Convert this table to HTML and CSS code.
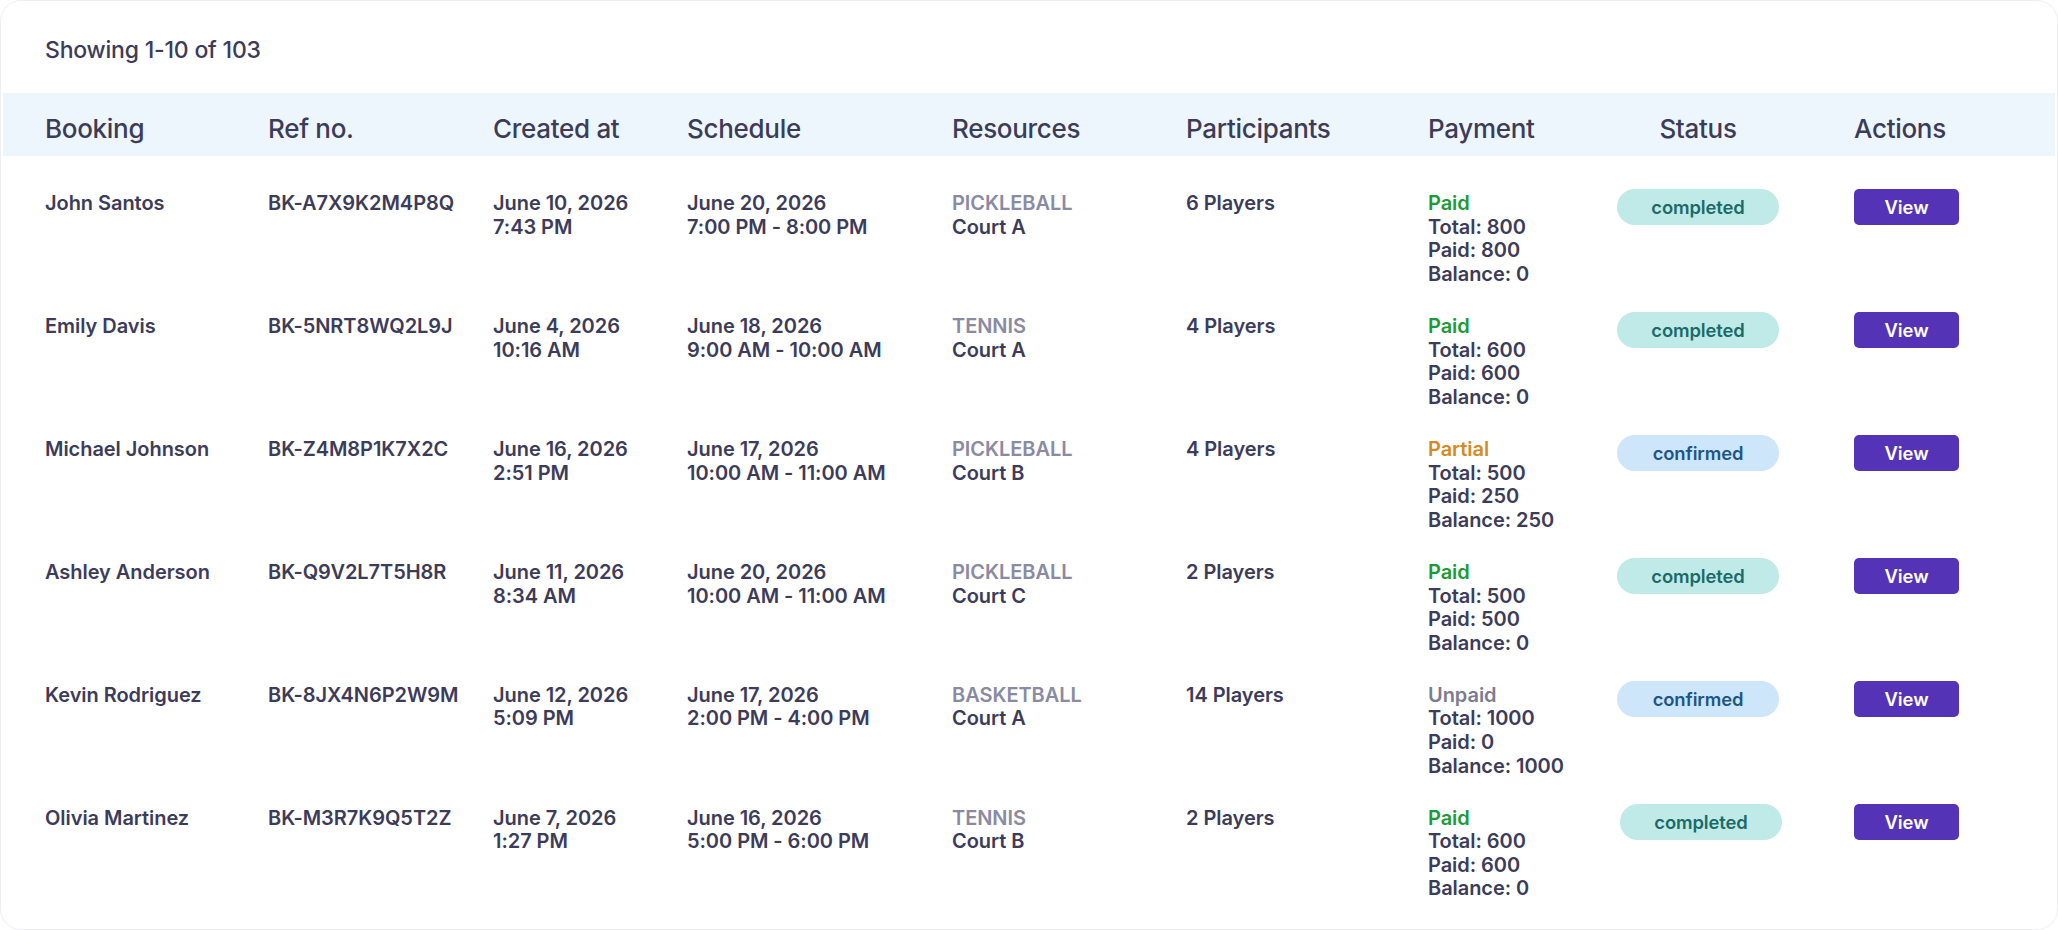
FILE: index.html
```html
<!DOCTYPE html>
<html lang="en">
<head>
<meta charset="utf-8">
<title>Bookings</title>
<link rel="stylesheet" href="styles.css">
</head>
<body>
<div class="card">
  <div class="summary">Showing 1-10 of 103</div>
  <div class="grid head">
    <div>Booking</div>
    <div>Ref no.</div>
    <div>Created at</div>
    <div>Schedule</div>
    <div>Resources</div>
    <div>Participants</div>
    <div>Payment</div>
    <div class="status-head">Status</div>
    <div>Actions</div>
  </div>
  <div class="rows">
    <div class="grid row">
      <div>John Santos</div>
      <div>BK-A7X9K2M4P8Q</div>
      <div>June 10, 2026<br>7:43 PM</div>
      <div>June 20, 2026<br>7:00 PM - 8:00 PM</div>
      <div><span class="cat">PICKLEBALL</span><br>Court A</div>
      <div>6 Players</div>
      <div><span class="pay paid">Paid</span><br>Total: 800<br>Paid: 800<br>Balance: 0</div>
      <div><span class="badge completed">completed</span></div>
      <div><button class="view">View</button></div>
    </div>
    <div class="grid row">
      <div>Emily Davis</div>
      <div>BK-5NRT8WQ2L9J</div>
      <div>June 4, 2026<br>10:16 AM</div>
      <div>June 18, 2026<br>9:00 AM - 10:00 AM</div>
      <div><span class="cat">TENNIS</span><br>Court A</div>
      <div>4 Players</div>
      <div><span class="pay paid">Paid</span><br>Total: 600<br>Paid: 600<br>Balance: 0</div>
      <div><span class="badge completed">completed</span></div>
      <div><button class="view">View</button></div>
    </div>
    <div class="grid row">
      <div>Michael Johnson</div>
      <div>BK-Z4M8P1K7X2C</div>
      <div>June 16, 2026<br>2:51 PM</div>
      <div>June 17, 2026<br>10:00 AM - 11:00 AM</div>
      <div><span class="cat">PICKLEBALL</span><br>Court B</div>
      <div>4 Players</div>
      <div><span class="pay partial">Partial</span><br>Total: 500<br>Paid: 250<br>Balance: 250</div>
      <div><span class="badge confirmed">confirmed</span></div>
      <div><button class="view">View</button></div>
    </div>
    <div class="grid row">
      <div>Ashley Anderson</div>
      <div>BK-Q9V2L7T5H8R</div>
      <div>June 11, 2026<br>8:34 AM</div>
      <div>June 20, 2026<br>10:00 AM - 11:00 AM</div>
      <div><span class="cat">PICKLEBALL</span><br>Court C</div>
      <div>2 Players</div>
      <div><span class="pay paid">Paid</span><br>Total: 500<br>Paid: 500<br>Balance: 0</div>
      <div><span class="badge completed">completed</span></div>
      <div><button class="view">View</button></div>
    </div>
    <div class="grid row">
      <div>Kevin Rodriguez</div>
      <div>BK-8JX4N6P2W9M</div>
      <div>June 12, 2026<br>5:09 PM</div>
      <div>June 17, 2026<br>2:00 PM - 4:00 PM</div>
      <div><span class="cat">BASKETBALL</span><br>Court A</div>
      <div>14 Players</div>
      <div><span class="pay unpaid">Unpaid</span><br>Total: 1000<br>Paid: 0<br>Balance: 1000</div>
      <div><span class="badge confirmed">confirmed</span></div>
      <div><button class="view">View</button></div>
    </div>
    <div class="grid row">
      <div>Olivia Martinez</div>
      <div>BK-M3R7K9Q5T2Z</div>
      <div>June 7, 2026<br>1:27 PM</div>
      <div>June 16, 2026<br>5:00 PM - 6:00 PM</div>
      <div><span class="cat">TENNIS</span><br>Court B</div>
      <div>2 Players</div>
      <div><span class="pay paid">Paid</span><br>Total: 600<br>Paid: 600<br>Balance: 0</div>
      <div><span class="badge completed shifted">completed</span></div>
      <div><button class="view">View</button></div>
    </div>
  </div>
</div>
</body>
</html>
```
FILE: styles.css
```css
* { box-sizing: border-box; }
html, body {
  margin: 0;
  padding: 0;
  background: #ffffff;
  overflow: hidden;
}
body {
  font-family: Inter, "Noto Sans", "Liberation Sans", sans-serif;
  color: #3c3c5a;
}
.card {
  width: 2058px;
  height: 930px;
  border: 1px solid #efeff3;
  border-radius: 21px;
  background: #ffffff;
  overflow: hidden;
}
.summary {
  padding: 32.5px 0 0 44px;
  font-size: 23px;
  line-height: 32px;
  font-weight: 500;
  letter-spacing: -0.2px;
  height: 92px;
}
.grid {
  display: grid;
  grid-template-columns: 223px 225px 194px 265px 234px 242px 189px 237px 1fr;
}
.head {
  margin: 0 2px;
  padding: 20px 0 11px 42px;
  height: 63px;
  background: #eef6fd;
  font-size: 26px;
  line-height: 32px;
  font-weight: 500;
  letter-spacing: -0.3px;
}
.status-head {
  width: 162px;
  text-align: center;
}
.rows {
  padding: 22.3px 0 0 44px;
}
.row {
  padding: 14px 0 14.5px 0;
  font-size: 20px;
  line-height: 23.6px;
  font-weight: 600;
  letter-spacing: -0.05px;
}
.cat { color: #8a8aa2; }
.pay.paid { color: #1e9a38; }
.pay.partial { color: #d68a22; }
.pay.unpaid { color: #7b7b92; }
.badge {
  display: flex;
  align-items: center;
  justify-content: center;
  width: 162px;
  height: 36px;
  margin-top: -3px;
  border-radius: 18px;
  font-size: 18.4px;
  line-height: 22px;
  font-weight: 600;
  letter-spacing: -0.1px;
}
.badge.shifted { margin-left: 3px; }
.completed {
  background: #bfeae7;
  color: #1b6a68;
}
.confirmed {
  background: #cde6fa;
  color: #1d5684;
}
.view {
  display: block;
  width: 105px;
  height: 36px;
  margin-top: -3px;
  border: none;
  border-radius: 5px;
  background: #5433b7;
  color: #ffffff;
  font-family: inherit;
  font-size: 18.4px;
  font-weight: 600;
  padding: 0;
}
```
